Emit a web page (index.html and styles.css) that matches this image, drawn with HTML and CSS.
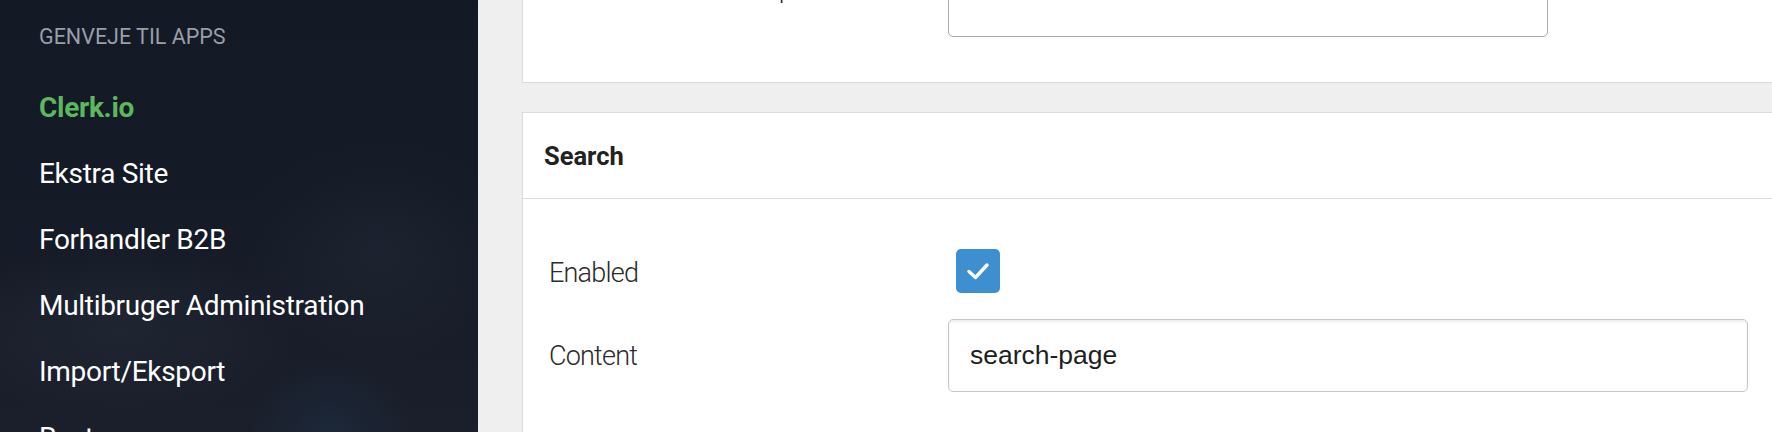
FILE: index.html
```html
<!DOCTYPE html>
<html lang="da">
<head>
<meta charset="utf-8">
<title>Clerk.io settings</title>
<link rel="stylesheet" href="styles.css">
</head>
<body>
<div class="layout">
  <aside class="sidebar">
    <div class="sidebar-title">GENVEJE TIL APPS</div>
    <ul class="app-list">
      <li class="app active">Clerk.io</li>
      <li class="app">Ekstra Site</li>
      <li class="app">Forhandler B2B</li>
      <li class="app">Multibruger Administration</li>
      <li class="app">Import/Eksport</li>
      <li class="app">Rest</li>
    </ul>
  </aside>
  <main class="main">
    <section class="card card-first">
      <div class="card-body first-body">
        <div class="field-row">
          <label class="field-label">Live search item template</label>
          <textarea class="field-textarea" readonly></textarea>
        </div>
      </div>
    </section>
    <section class="card card-search">
      <header class="card-header">Search</header>
      <div class="card-body search-body">
        <div class="field-row row-check">
          <label class="field-label">Enabled</label>
          <span class="checkbox">
            <svg viewBox="0 0 44 44" width="44" height="44" aria-hidden="true">
              <path d="M13 22.5 L19.5 28.5 L31 16" fill="none" stroke="#ffffff" stroke-width="3.4" stroke-linecap="round" stroke-linejoin="round"/>
            </svg>
          </span>
        </div>
        <div class="field-row">
          <label class="field-label">Content</label>
          <input class="field-input" type="text" value="search-page" readonly>
        </div>
      </div>
    </section>
  </main>
</div>
</body>
</html>
```
FILE: styles.css
```css
html, body {
  margin: 0;
  padding: 0;
  height: 100%;
}
body {
  overflow: hidden;
  font-family: Roboto, "Liberation Sans", Arial, sans-serif;
}
.layout {
  display: flex;
  height: 432px;
  overflow: hidden;
}
.sidebar {
  flex: 0 0 478px;
  box-sizing: border-box;
  padding: 22px 0 0 39px;
  background-color: #131925;
  background-image:
    radial-gradient(ellipse 260px 120px at 120px 330px, rgba(60, 66, 82, 0.22), rgba(60, 66, 82, 0) 70%),
    radial-gradient(ellipse 200px 160px at 380px 250px, rgba(55, 62, 78, 0.20), rgba(55, 62, 78, 0) 70%),
    radial-gradient(circle 110px at 330px 440px, rgba(30, 52, 78, 0.45), rgba(30, 52, 78, 0) 75%),
    linear-gradient(180deg, #131925 0%, #141a26 45%, #1b1f2b 100%);
}
.sidebar-title {
  font-size: 21.5px;
  line-height: 30px;
  color: #9a9ea6;
  font-weight: 400;
  margin-bottom: 23px;
}
.app-list {
  list-style: none;
  margin: 0;
  padding: 0;
}
.app {
  font-size: 28px;
  line-height: 66px;
  height: 66px;
  color: #ffffff;
  font-weight: 400;
  letter-spacing: -0.3px;
  white-space: nowrap;
}
.app.active {
  color: #5cb85c;
  font-weight: 700;
  letter-spacing: -0.3px;
}
.main {
  flex: 1 1 auto;
  background: #efefef;
  padding-left: 44px;
  min-width: 0;
}
.card {
  background: #ffffff;
  border: 1px solid #dcdcdc;
  margin-right: -20px;
}
.card-first {
  margin-top: -89px;
}
.first-body {
  padding: 26px 26px 45px;
}
.card-search {
  margin-top: 29px;
}
.card-header {
  height: 85px;
  display: flex;
  align-items: center;
  padding-left: 21px;
  border-bottom: 1px solid #dcdcdc;
  font-size: 25.5px;
  line-height: 30px;
  font-weight: 700;
  color: #222222;
}
.search-body {
  padding: 49px 26px 40px;
  display: flex;
  flex-direction: column;
  gap: 26px;
}
.field-row {
  display: flex;
  align-items: center;
}
.field-label {
  flex: 0 0 399px;
  font-size: 27px;
  line-height: 40px;
  font-weight: 300;
  letter-spacing: -0.8px;
  color: #2b2b2b;
}
.row-check .field-label {
  padding-top: 5px;
}
.field-textarea {
  box-sizing: border-box;
  width: 600px;
  height: 99px;
  border: 1.5px solid #a9a9a9;
  border-radius: 5px;
  background: #ffffff;
  resize: none;
  margin: 0;
  outline: none;
}
.checkbox {
  display: block;
  width: 44px;
  height: 44px;
  margin-left: 8px;
  border-radius: 5px;
  background: #3d8fcf;
}
.checkbox svg {
  display: block;
}
.field-input {
  box-sizing: border-box;
  width: 800px;
  height: 73px;
  margin: 0;
  padding: 0 21px;
  border: 1.5px solid #c8c8c8;
  border-radius: 5px;
  box-shadow: inset 0 2px 3px rgba(0, 0, 0, 0.07);
  background: #ffffff;
  font-family: "Liberation Sans", Arial, sans-serif;
  font-size: 26.5px;
  color: #1e1e1e;
  outline: none;
  -webkit-appearance: none;
  appearance: none;
}
```
